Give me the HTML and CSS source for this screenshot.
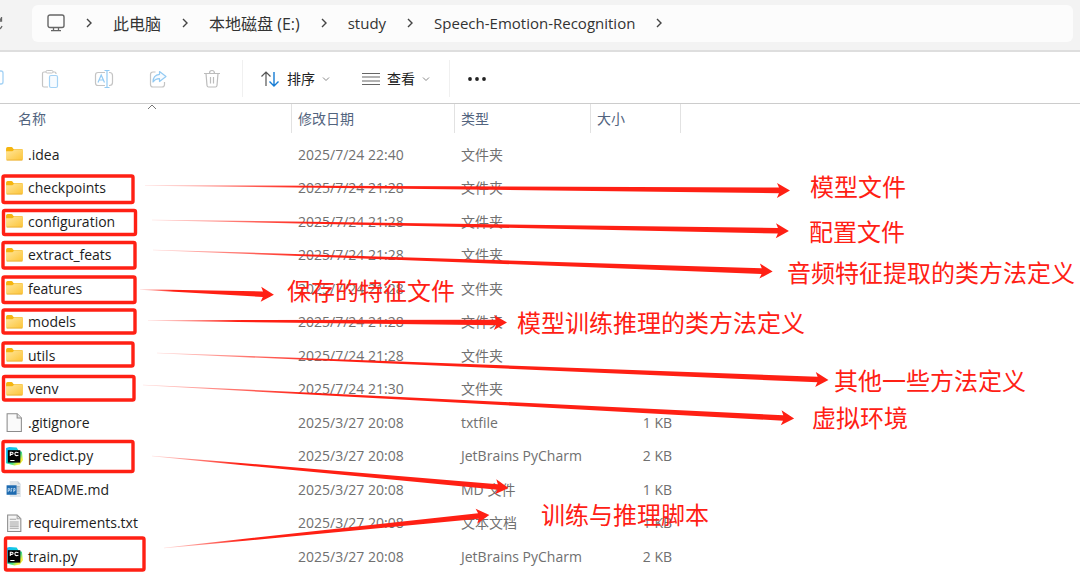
FILE: index.html
```html
<!DOCTYPE html>
<html lang="zh-CN">
<head>
<meta charset="utf-8">
<title>Speech-Emotion-Recognition</title>
<link rel="stylesheet" href="styles.css">
</head>
<body>
<svg class="symbols" aria-hidden="true">
  <defs>
    <linearGradient id="folder-face" x1="0" y1="0" x2="1" y2="1"><stop offset="0" stop-color="#ffe69c"/><stop offset="1" stop-color="#fcc436"/></linearGradient>
    <linearGradient id="pycharm-back" x1="0" y1="0" x2="1" y2="1"><stop offset="0" stop-color="#12b4ff"/><stop offset=".4" stop-color="#14cfd8"/><stop offset=".62" stop-color="#43dc83"/><stop offset=".8" stop-color="#f4f13d"/><stop offset="1" stop-color="#e4ee3c"/></linearGradient>
    <linearGradient id="fade"><stop offset="0" stop-color="#ff2014" stop-opacity=".15"/><stop offset=".25" stop-color="#ff2014"/></linearGradient>
  </defs>
  <symbol id="chevron" viewBox="0 0 8 12"><path d="M2 2l4 4-4 4" fill="none" stroke="#444" stroke-width="1.4"/></symbol>
  <symbol id="down" viewBox="0 0 8 6"><path d="M1 1.5l3 3 3-3" fill="none" stroke="#888" stroke-width="1"/></symbol>
  <symbol id="folder" viewBox="0 0 18 18"><path d="M1 3.500q0-1.500 1.500-1.500H6q1 0 1.500 1l.8 1H16q1 0 1 1v3H1z" fill="#f5b50f"/><path d="M1 6h6L8.700 4.500H17v8.500q0 1.500-1.200 1.500H2.200Q1 14.500 1 13z" fill="url(#folder-face)"/><path d="M1.500 14.300h15" stroke="#e8ad2f" stroke-width=".8"/></symbol>
  <symbol id="page" viewBox="0 0 18 18"><path d="M2 .700h9.500l4 4v12.800H2z" fill="#fafafa" stroke="#8c8c8c"/><path d="M11.500.700v4h4" fill="#e4e4e4" stroke="#8c8c8c"/></symbol>
  <symbol id="text" viewBox="0 0 18 18"><path d="M2.500 1h9l3.500 3.500V16.500H2.500z" fill="#f5f5f5" stroke="#8c8c8c"/><path d="M11.500 1v3.500H15M4.500 5h6M4.500 7.500h8.500M4.500 9.500h8.500M4.500 11.500h8.500M4.500 13.500h8.500" fill="none" stroke="#a4a4a4"/></symbol>
  <symbol id="markdown" viewBox="0 0 18 18"><path d="M4.500 1h7.500l3 3v12H4.500z" fill="#dfe5ea"/><path d="M12 1v3h3" fill="#c7d0da"/><path d="M11 6.500h3M11 8.500h3M11 10.500h3M11 12.500h3" stroke="#9baebd"/><path d="M1.500 5h9.500v9H1.500z" fill="#1c6ab0"/><path d="M3 11.500V8h1.200v2H3M5.700 11.500V8H7M5.700 9.700h1M8.300 11.500V8h1.200v2H8.300" fill="none" stroke="#c5def3" stroke-width=".8"/></symbol>
  <symbol id="pycharm" viewBox="0 0 18 18"><path d="M1 1l3-1 7 .500 2 3 3 1 1 8-3 4-5 1-8-2z" fill="url(#pycharm-back)"/><path d="M2.700 3H14.500V14.800H2.700z" fill="#050505"/><path d="M5 8.500V5h1.200q1.500 0 1.500 1T6.200 7H5M12.700 5.500Q9.400 4 9.400 6.500t3.300 1.300M5 12.700H9" fill="none" stroke="#fff"/></symbol>
</svg>

<div class="explorer">
  <header class="location">
    <button class="refresh" aria-label="刷新"><svg width="16" height="16" viewBox="0 0 16 16"><path d="M13.500 4.500A6.200 6.200 0 1 0 14 10M13.500 1v4h-4" fill="none" stroke="#666" stroke-width="1.300"/></svg></button>
    <nav class="crumbs">
      <svg class="monitor" width="18" height="18" viewBox="0 0 18 18"><rect x="1" y="1" width="16" height="12.500" rx="2" fill="none" stroke="#666" stroke-width="1.400"/><path d="M6.500 14v2.500M11.500 14v2.500M4 16.700h10" stroke="#666" stroke-width="1.300"/></svg>
      <svg class="chevron"><use href="#chevron"/></svg>
      <a class="place" href="#">此电脑</a>
      <svg class="chevron"><use href="#chevron"/></svg>
      <a class="place" href="#">本地磁盘 (E:)</a>
      <svg class="chevron"><use href="#chevron"/></svg>
      <a href="#">study</a>
      <svg class="chevron"><use href="#chevron"/></svg>
      <a href="#">Speech-Emotion-Recognition</a>
      <svg class="chevron"><use href="#chevron"/></svg>
    </nav>
  </header>

  <div class="toolbar">
    <button class="tool" aria-label="复制"><svg width="20" height="20" viewBox="0 0 20 20"><rect x="6" y="2" width="11" height="13" rx="2" fill="none" stroke="#a4d2f5" stroke-width="1.300"/></svg></button>
    <button class="tool" aria-label="粘贴"><svg width="20" height="20" viewBox="0 0 20 20"><path d="M6 3H4Q2.500 3 2.500 4.500v12Q2.500 18 4 18h4M13 3h1.500Q16 3 16 4.500V5" fill="none" stroke="#c4c4c4" stroke-width="1.200"/><rect x="6" y="1.500" width="7" height="2.500" rx="1.200" fill="#fff" stroke="#c4c4c4"/><rect x="9.500" y="6.500" width="8" height="12" rx="1.500" fill="#f7fbff" stroke="#a4d2f5" stroke-width="1.200"/></svg></button>
    <button class="tool" aria-label="重命名"><svg width="20" height="20" viewBox="0 0 20 20"><path d="M11 3.500H4Q1.500 3.500 1.500 6v8Q1.500 16.500 4 16.500h7M15 3.500h.5q3 0 3 3v7q0 3-3 3H15" fill="none" stroke="#c4c4c4" stroke-width="1.200"/><path d="M4 13.500L7.200 6l3.300 7.500M5.200 11h4.200M10.500 1.500h5M13 1.500v17M10.500 18.500h5" fill="none" stroke="#94cbf3" stroke-width="1.200"/></svg></button>
    <button class="tool" aria-label="共享"><svg width="20" height="20" viewBox="0 0 20 20"><path d="M7.500 3H5Q2.500 3 2.500 5.500v10Q2.500 18 5 18h9q2.500 0 2.500-2.500V13" fill="none" stroke="#c4c4c4" stroke-width="1.200"/><path d="M11.500 2.500l6.500 5-6.500 5V9.700Q7.500 9.500 5 13q0-7 6.500-7.700z" fill="#f7fbff" stroke="#94cbf3" stroke-width="1.200" stroke-linejoin="round"/></svg></button>
    <button class="tool" aria-label="删除"><svg width="20" height="20" viewBox="0 0 20 20"><path d="M2 4.500h16M4 4.500l1 12Q5.200 18 6.500 18h7q1.300 0 1.500-1.500l1-12M7.500 4.500q0-3 2.500-3t2.500 3M8.500 8v6.500M11.500 8v6.500" fill="none" stroke="#bcbcbc" stroke-width="1.200"/></svg></button>
    <div class="group">
      <button class="menu"><svg width="20" height="18" viewBox="0 0 20 18"><path d="M6 16V2M1.500 6.500L6 2l4.500 4.500" fill="none" stroke="#555" stroke-width="1.200"/><path d="M14 2v14M9.500 11.500L14 16l4.500-4.500" fill="none" stroke="#167cd4" stroke-width="1.400"/></svg><span>排序</span><svg class="down"><use href="#down"/></svg></button>
      <button class="menu"><svg width="18" height="14" viewBox="0 0 18 14"><path d="M0 1.500h18M0 5h18M0 9h18M0 12.500h18" stroke="#666" stroke-width="1.200"/></svg><span>查看</span><svg class="down"><use href="#down"/></svg></button>
    </div>
    <button class="more" aria-label="更多"><svg width="20" height="6" viewBox="0 0 20 6"><g fill="#222"><circle cx="3" cy="3" r="1.900"/><circle cx="10" cy="3" r="1.900"/><circle cx="17" cy="3" r="1.900"/></g></svg></button>
  </div>

  <main class="listing">
    <table class="files">
      <colgroup><col class="col-name"><col class="col-date"><col class="col-type"><col class="col-size"></colgroup>
      <thead>
        <tr><th class="name-head"><span>名称</span><svg class="sort" width="10" height="6" viewBox="0 0 10 6"><path d="M1 5l4-4 4 4" fill="none" stroke="#777"/></svg></th><th><span>修改日期</span></th><th><span>类型</span></th><th><span>大小</span></th></tr>
      </thead>
      <tbody>
        <tr><td><div class="file"><svg><use href="#folder"/></svg>.idea</div></td><td>2025/7/24 22:40</td><td>文件夹</td><td></td></tr>
        <tr><td><div class="file"><svg><use href="#folder"/></svg>checkpoints</div></td><td>2025/7/24 21:28</td><td>文件夹</td><td></td></tr>
        <tr><td><div class="file"><svg><use href="#folder"/></svg>configuration</div></td><td>2025/7/24 21:28</td><td>文件夹</td><td></td></tr>
        <tr><td><div class="file"><svg><use href="#folder"/></svg>extract_feats</div></td><td>2025/7/24 21:28</td><td>文件夹</td><td></td></tr>
        <tr><td><div class="file"><svg><use href="#folder"/></svg>features</div></td><td>2025/7/24 21:28</td><td>文件夹</td><td></td></tr>
        <tr><td><div class="file"><svg><use href="#folder"/></svg>models</div></td><td>2025/7/24 21:28</td><td>文件夹</td><td></td></tr>
        <tr><td><div class="file"><svg><use href="#folder"/></svg>utils</div></td><td>2025/7/24 21:28</td><td>文件夹</td><td></td></tr>
        <tr><td><div class="file"><svg><use href="#folder"/></svg>venv</div></td><td>2025/7/24 21:30</td><td>文件夹</td><td></td></tr>
        <tr><td><div class="file"><svg><use href="#page"/></svg>.gitignore</div></td><td>2025/3/27 20:08</td><td>txtfile</td><td>1 KB</td></tr>
        <tr><td><div class="file"><svg><use href="#pycharm"/></svg>predict.py</div></td><td>2025/3/27 20:08</td><td>JetBrains PyCharm</td><td>2 KB</td></tr>
        <tr><td><div class="file"><svg><use href="#markdown"/></svg>README.md</div></td><td>2025/3/27 20:08</td><td>MD 文件</td><td>1 KB</td></tr>
        <tr><td><div class="file"><svg><use href="#text"/></svg>requirements.txt</div></td><td>2025/3/27 20:08</td><td>文本文档</td><td>1 KB</td></tr>
        <tr><td><div class="file"><svg><use href="#pycharm"/></svg>train.py</div></td><td>2025/3/27 20:08</td><td>JetBrains PyCharm</td><td>2 KB</td></tr>
      </tbody>
    </table>
  </main>

  <svg class="marks" width="1080" height="580" viewBox="0 0 1080 580" aria-hidden="true">
    <g fill="none" stroke="#ff2014" stroke-width="3.400">
      <rect x="3" y="176" width="130" height="26.500" rx="1.500"/>
      <rect x="3.500" y="210.500" width="132" height="24" rx="1.500"/>
      <rect x="3" y="242.500" width="132" height="25.500" rx="1.500"/>
      <rect x="3" y="277" width="132" height="25.500" rx="1.500"/>
      <rect x="3" y="310" width="132" height="23" rx="1.500"/>
      <rect x="3" y="343" width="130" height="23" rx="1.500"/>
      <rect x="3.500" y="376.500" width="130.500" height="23.500" rx="1.500"/>
      <rect x="3" y="441.500" width="130" height="30" rx="1.500"/>
      <rect x="5.500" y="538" width="138.500" height="32" rx="1.500"/>
    </g>
    <g fill="url(#fade)">
      <path transform="translate(145 185.500) rotate(.444)" d="M0-.3L634-2.800 632-7.500 645 0 632 7.500 634 2.800 0 .3z"/>
      <path transform="translate(152 220) rotate(.989)" d="M0-.3L626-2.800 624-7.500 637 0 624 7.500 626 2.800 0 .3z"/>
      <path transform="translate(153 250) rotate(1.986)" d="M0-.3L609-2.800 607-7.500 620 0 607 7.500 609 2.800 0 .3z"/>
      <path transform="translate(140 289.500) rotate(2.200)" d="M0-.3L123-2.800 121-7.500 134 0 121 7.500 123 2.800 0 .3z"/>
      <path transform="translate(148 320.500) rotate(.320)" d="M0-.3L348-2.800 346-7.500 359 0 346 7.500 348 2.800 0 .3z"/>
      <path transform="translate(157 353) rotate(2.304)" d="M0-.3L661-2.800 659-7.500 672 0 659 7.500 661 2.800 0 .3z"/>
      <path transform="translate(143 385) rotate(2.946)" d="M0-.3L641-2.800 639-7.500 652 0 639 7.500 641 2.800 0 .3z"/>
      <path transform="translate(152 456) rotate(5.120)" d="M0-.3L347-2.800 345-7.500 358 0 345 7.500 347 2.800 0 .3z"/>
      <path transform="translate(164 548) rotate(-5.800)" d="M0-.3L316-2.800 314-7.500 327 0 314 7.500 316 2.800 0 .3z"/>
    </g>
  </svg>
  <span class="note note-checkpoints">模型文件</span>
  <span class="note note-configuration">配置文件</span>
  <span class="note note-extract">音频特征提取的类方法定义</span>
  <span class="note note-features">保存的特征文件</span>
  <span class="note note-models">模型训练推理的类方法定义</span>
  <span class="note note-utils">其他一些方法定义</span>
  <span class="note note-venv">虚拟环境</span>
  <span class="note note-scripts">训练与推理脚本</span>
</div>
</body>
</html>
```
FILE: styles.css
```css
* {
  box-sizing: border-box;
}

body {
  margin: 0;
  background: #fff;
  color: #222;
  font-family: "Open Sans", "Noto Sans CJK SC", sans-serif;
  font-size: 14px;
}

button {
  display: flex;
  align-items: center;
  justify-content: center;
  padding: 0;
  border: 0;
  background: none;
  color: inherit;
  font: inherit;
}

.symbols {
  position: absolute;
  width: 0;
  height: 0;
}

.explorer {
  position: relative;
  overflow: hidden;
}

.location {
  display: flex;
  padding: 5px 7px 8px 0;
  background: #f3f3f3;
  border-bottom: 2px solid #dedede;
}

.refresh {
  width: 32px;
  margin-left: -20px;
  margin-right: 20px;
}

.crumbs {
  display: flex;
  flex: 1;
  align-items: center;
  gap: 20px;
  height: 37px;
  padding: 0 15px 1px;
  border-radius: 6px;
  background: #fcfcfc;
  font-size: 15px;
}

.crumbs a {
  color: #333;
  text-decoration: none;
  white-space: nowrap;
}

.crumbs .place {
  font-size: 16px;
}

.chevron {
  width: 8px;
  height: 12px;
}

.toolbar {
  display: flex;
  align-items: center;
  height: 52px;
  margin-left: -31px;
  padding-top: 2px;
  border-bottom: 1px solid #ccc;
}

.tool {
  width: 54px;
  height: 36px;
}

.group {
  display: flex;
  align-items: center;
  gap: 32px;
  height: 37px;
  margin-left: 3px;
  padding: 0 19px 0 17px;
  border: 1px solid #f0f0f0;
  border-width: 0 1px;
}

.menu {
  gap: 7px;
}

.menu span {
  padding-bottom: 2px;
}

.down {
  width: 8px;
  height: 6px;
}

.more {
  margin-left: 17px;
}

.files {
  width: 681px;
  table-layout: fixed;
  border-collapse: collapse;
  color: #707070;
}

.col-name {
  width: 292px;
}

.col-date {
  width: 163px;
}

.col-type {
  width: 136px;
}

.col-size {
  width: 90px;
}

.files th {
  padding: 0 0 5px;
  color: #52647e;
  font-weight: 400;
  text-align: left;
}

.files th span {
  display: block;
  height: 29px;
  padding-left: 6px;
  border-right: 1px solid #e2e2e2;
  line-height: 29px;
}

.files .name-head {
  position: relative;
}

.files .name-head span {
  padding-left: 18px;
}

.sort {
  position: absolute;
  top: 0;
  left: 147px;
}

.files td {
  height: 33px;
  padding: 0 0 0 6px;
  line-height: 20px;
  white-space: nowrap;
}

.files td:first-child {
  padding-left: 5px;
}

.files tr:nth-child(even) td {
  height: 34px;
}

.files td:last-child {
  padding-right: 9px;
  text-align: right;
}

.file {
  display: flex;
  align-items: center;
  gap: 4px;
  color: #1d1d1d;
}

.file svg {
  width: 19px;
  height: 19px;
}

.marks {
  position: absolute;
  top: 0;
  left: 0;
  pointer-events: none;
}

.note {
  position: absolute;
  color: #ff2014;
  font-size: 24px;
  line-height: 30px;
  white-space: nowrap;
}

.note-checkpoints {
  top: 172px;
  left: 810px;
}

.note-configuration {
  top: 217px;
  left: 809px;
}

.note-extract {
  top: 258px;
  left: 787px;
}

.note-features {
  top: 276px;
  left: 287px;
}

.note-models {
  top: 308px;
  left: 517px;
}

.note-utils {
  top: 366px;
  left: 834px;
}

.note-venv {
  top: 403px;
  left: 812px;
}

.note-scripts {
  top: 500px;
  left: 541px;
}
```
